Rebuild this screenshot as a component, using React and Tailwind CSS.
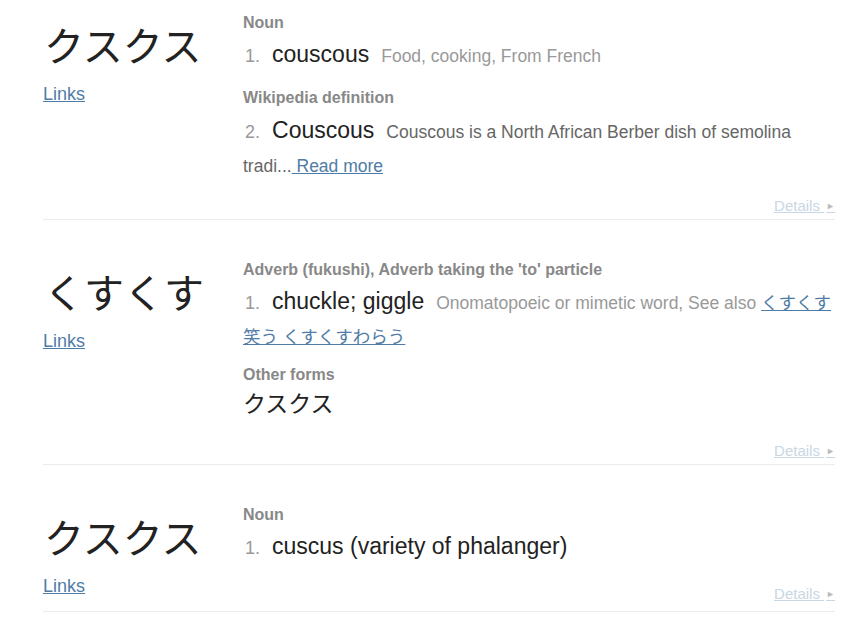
const sans = { fontFamily: '"Liberation Sans", Arial, "Noto Sans CJK JP", sans-serif' };

function Label({ children, className = "" }) {
  return (
    <div className={`text-[16px] leading-[20px] font-bold text-[#888] ${className}`}>{children}</div>
  );
}

function Num({ n }) {
  return <span className="text-[18px] text-[#999] ml-[2px] mr-[12px]">{n}.</span>;
}

function Entry({ word, top = 40, detailsGap, children }) {
  return (
    <div className="flex border-b border-[#ebebeb]" style={{ paddingTop: top }}>
      <div className="w-[200px] shrink-0 pt-[7px] pb-[12px]">
        <div className="text-[40px] leading-[48px] text-[#222] pl-[1px] font-['Noto_Sans_CJK_JP',sans-serif]">
          {word}
        </div>
        <a href="#" className="block mt-[13px] text-[18px] leading-[26px] text-[#4f7ca6] underline">
          Links
        </a>
      </div>
      <div className="flex-1 min-w-0 pb-[3px]">
        {children}
        <div className="flex justify-end" style={{ marginTop: detailsGap }}>
          <a href="#" className="text-[15px] leading-[20px] text-[#c8d7e3] underline decoration-[#c8d7e3] whitespace-nowrap">
            Details <span className="text-[9px] text-[#bbb] align-[2px] ml-[2px]">&#9658;</span>
          </a>
        </div>
      </div>
    </div>
  );
}

export default function App() {
  return (
    <div className="min-h-screen bg-white" style={sans}>
      <div className="ml-[43px] w-[792px]">
        <Entry word="クスクス" top={13} detailsGap={14}>
          <Label>Noun</Label>
          <div className="mt-[4px] text-[23px] leading-[1.5] text-[#222]">
            <Num n={1} />
            <span>couscous</span>
            <span className="ml-[12px] text-[17.5px] text-[#999]">Food, cooking, From French</span>
          </div>
          <Label className="mt-[16px]">Wikipedia definition</Label>
          <div className="mt-[5px] text-[23px] leading-[1.5] text-[#222]">
            <Num n={2} />
            <span>Couscous</span>
            <span className="ml-[12px] text-[17.5px] text-[#666]">
              Couscous is a North African Berber dish of semolina tradi...
              <a href="#" className="text-[#4f7ca6] underline"> Read more</a>
            </span>
          </div>
        </Entry>

        <Entry word="くすくす" detailsGap={20}>
          <Label>Adverb (fukushi), Adverb taking the 'to' particle</Label>
          <div className="mt-[4px] text-[23px] leading-[1.5] text-[#222]">
            <Num n={1} />
            <span>chuckle; giggle</span>
            <span className="ml-[12px] text-[17.5px] text-[#999]">
              Onomatopoeic or mimetic word, See also{" "}
              <a href="#" className="text-[#4f7ca6] underline">くすくす笑う くすくすわらう</a>
            </span>
          </div>
          <Label className="mt-[12px]">Other forms</Label>
          <div className="mt-[2px] text-[23px] leading-[1.5] text-[#222]">クスクス</div>
        </Entry>

        <Entry word="クスクス" detailsGap={20}>
          <Label>Noun</Label>
          <div className="mt-[4px] text-[23px] leading-[1.5] text-[#222]">
            <Num n={1} />
            <span>cuscus (variety of phalanger)</span>
          </div>
        </Entry>
      </div>
    </div>
  );
}
